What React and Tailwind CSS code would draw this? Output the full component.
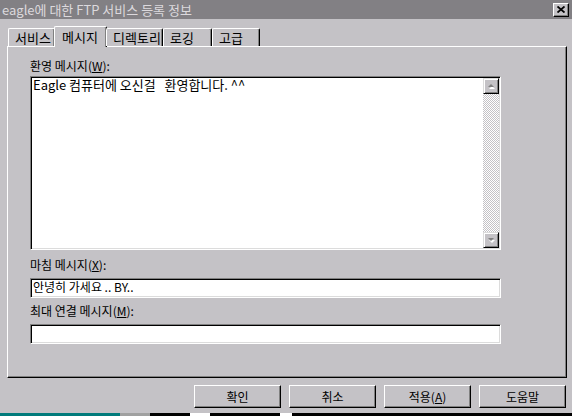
import React from "react";

const font = { fontFamily: '"Noto Sans CJK KR", "Noto Sans", sans-serif' };

const tabs = [
  { label: "서비스", w: "w-[47px]" },
  { label: "메시지", w: "w-[53px]", active: true },
  { label: "디렉토리", w: "w-[57px]" },
  { label: "로깅", w: "w-[49px]" },
  { label: "고급", w: "w-[48px]" },
];

const Sunken = ({ className = "", children }) => (
  <div
    className={`border border-t-[#808080] border-l-[#808080] border-b-white border-r-white bg-white shadow-[inset_1px_1px_0_#000,inset_-1px_-1px_0_#dcdcdc] ${className}`}
  >
    {children}
  </div>
);

const Button = ({ children }) => (
  <button className="w-[87px] h-[23px] bg-[#c4c2c6] border border-t-white border-l-white border-b-black border-r-black shadow-[inset_-1px_-1px_0_#808080] text-[12px] leading-[14px] text-black">
    {children}
  </button>
);

const ScrollBtn = ({ up }) => (
  <div className="w-[16px] h-[16px] bg-[#c4c2c6] border border-t-[#dcdcdc] border-l-[#dcdcdc] border-b-black border-r-black shadow-[inset_1px_1px_0_#fff,inset_-1px_-1px_0_#808080] flex items-center justify-center">
    <svg width="8" height="5" viewBox="0 0 8 5">
      {up ? (
        <>
          <path d="M4 1 L7 4 L1 4 Z" fill="#fff" transform="translate(1 1)" />
          <path d="M4 0 L7 3 L1 3 Z" fill="#808080" />
        </>
      ) : (
        <>
          <path d="M1 1 L7 1 L4 4 Z" fill="#fff" transform="translate(1 1)" />
          <path d="M1 0 L7 0 L4 3 Z" fill="#808080" />
        </>
      )}
    </svg>
  </div>
);

export default function App() {
  return (
    <div className="w-[572px] h-[416px] bg-[#c4c2c6] overflow-hidden flex flex-col text-black" style={font}>
      {/* Title bar */}
      <div className="h-[19px] bg-[#828084] flex items-center justify-between pl-[2px] pr-[3px]">
        <span className="text-[13px] leading-[15px] text-[#dcd9dd]">eagle에 대한 FTP 서비스 등록 정보</span>
        <div className="w-[16px] h-[14px] bg-[#c4c2c6] border border-t-white border-l-white border-b-black border-r-black shadow-[inset_-1px_-1px_0_#808080] flex items-center justify-center">
          <svg width="8" height="7" viewBox="0 0 8 7">
            <path d="M0.5 0.5 L7.5 6.5 M7.5 0.5 L0.5 6.5" stroke="#000" strokeWidth="1.8" />
          </svg>
        </div>
      </div>

      <div className="flex-1 flex flex-col pl-[7px] pr-[5px] pt-[7px]">
        {/* Tabs */}
        <div className="flex items-end h-[20px] pl-[1px] relative z-10">
          {tabs.map((t) =>
            t.active ? (
              <div
                key={t.label}
                className={`${t.w} h-[21px] -mb-px -mx-[1px] bg-[#c4c2c6] border-t border-l border-t-white border-l-white border-r border-r-black shadow-[inset_-1px_0_0_#808080] rounded-t-[2px] pl-[7px] pt-[2px] text-[13px] leading-[15px]`}
              >
                {t.label}
              </div>
            ) : (
              <div
                key={t.label}
                className={`${t.w} h-[18px] border-t border-l border-t-white border-l-white border-r border-r-black shadow-[inset_-1px_0_0_#808080] rounded-t-[2px] pl-[6px] pt-[1px] text-[13px] leading-[15px]`}
              >
                {t.label}
              </div>
            )
          )}
        </div>

        {/* Panel */}
        <div className="w-[560px] h-[332px] border border-t-white border-l-white border-b-black border-r-black shadow-[inset_-1px_-1px_0_#808080] pl-[22px] pt-[12px] flex flex-col">
          <div className="text-[12px] leading-[14px] h-[16px]">
            환영 메시지(<span className="underline">W</span>):
          </div>
          <Sunken className="mt-[1px] w-[471px] h-[174px] flex">
            <div className="flex-1 pl-[2px] pt-[1px] text-[13px] leading-[14px]">Eagle 컴퓨터에 오신걸&nbsp;&nbsp; 환영합니다. ^^</div>
            <div className="w-[16px] mt-[1px] mb-[1px] mr-[1px] flex flex-col bg-[repeating-conic-gradient(#c4c2c6_0_25%,#ffffff_0_50%)] bg-[length:2px_2px]">
              <ScrollBtn up />
              <div className="flex-1" />
              <ScrollBtn />
            </div>
          </Sunken>

          <div className="mt-[8px] text-[12px] leading-[14px] h-[16px]">
            마침 메시지(<span className="underline">X</span>):
          </div>
          <Sunken className="mt-[4px] w-[471px] h-[20px] pl-[2px] text-[12px] leading-[16px]">안녕히 가세요 .. BY..</Sunken>

          <div className="mt-[6px] text-[12px] leading-[14px] h-[16px]">
            최대 연결 메시지(<span className="underline">M</span>):
          </div>
          <Sunken className="mt-[4px] w-[471px] h-[20px]" />
        </div>

        {/* Buttons */}
        <div className="flex justify-end gap-[8px] mt-[7px] pr-[1px]">
          <Button>확인</Button>
          <Button>취소</Button>
          <Button>
            적용(<span className="underline">A</span>)
          </Button>
          <Button>도움말</Button>
        </div>
      </div>

      {/* Edge of the desktop below */}
      <div className="h-[3px] flex">
        <div className="w-[120px] bg-[#007a7a]" />
        <div className="w-[30px] bg-[#a0a0a0]" />
        <div className="w-[40px] bg-black" />
        <div className="w-[20px] bg-white" />
        <div className="w-[70px] bg-black" />
        <div className="w-[12px] bg-white" />
        <div className="flex-1 bg-black" />
      </div>
    </div>
  );
}
